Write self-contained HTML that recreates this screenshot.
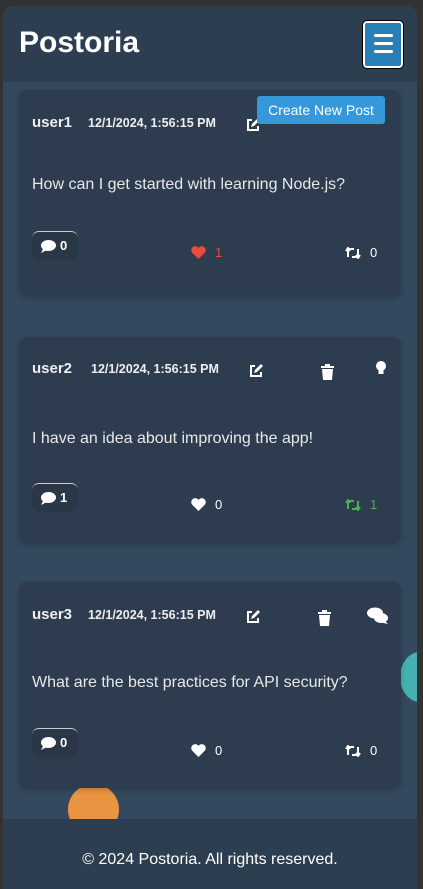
<!DOCTYPE html>
<html><head><meta charset="utf-8"><style>
*{margin:0;padding:0;box-sizing:border-box}
body{width:423px;height:889px;background:#333;font-family:"Liberation Sans",sans-serif;overflow:hidden;position:relative}
.wrap{position:absolute;left:3px;top:6px;width:414px;height:883px;background:#34495e;border-radius:10px 10px 0 0;overflow:hidden}
.hdr{position:absolute;left:0;top:0;width:414px;height:76px;background:#2c3e50}
.hdr h1{position:absolute;left:16px;top:20px;font-size:30px;color:#fff;font-weight:bold}
.menu{position:absolute;left:360px;top:15px;width:40px;height:47px;background:#2980b9;border:2px solid #fff;outline:1px solid #000;border-radius:4px}
.menu i{position:absolute;left:9px;width:19px;height:3px;background:#fff;border-radius:2px}
.card{position:absolute;left:16px;width:382px;height:206px;background:#2d3c4f;border-radius:8px;box-shadow:0 2px 6px rgba(0,0,0,.2)}
.u{position:absolute;left:13px;font-size:15px;font-weight:bold;color:#eee}
.d{position:absolute;font-size:12.5px;font-weight:bold;color:#eee}
.c{position:absolute;left:13px;font-size:16px;color:#e8e8e8}
.cb{position:absolute;left:13px;width:46px;height:29px;border-radius:7px;background:#2a3747;border-top:1px solid #ccc;color:#fff;font-size:13px;font-weight:bold;padding:6px 0 0 28px}
.cb svg{position:absolute;left:9px;top:8px}
.n{position:absolute;font-size:13px;color:#fff}
.ic{position:absolute}
.btn{position:absolute;left:254px;top:90px;width:128px;height:28px;background:#3498db;border-radius:3px;color:#fff;font-size:14px;text-align:center;line-height:28px}
.foot{position:absolute;left:0;top:813px;width:414px;height:70px;background:#2c3e50;color:#fff;font-size:16px;text-align:center;line-height:82px}
</style></head><body>
<div class="wrap">
<div class="hdr"><h1>Postoria</h1><div class="menu"><i style="top:11px"></i><i style="top:19px"></i><i style="top:27px"></i></div></div>

<div style="position:absolute;left:65px;top:778px;width:51px;height:51px;border-radius:50%;background:#e99440"></div>
<div style="position:absolute;left:397px;top:646px;width:40px;height:50px;border-radius:50%;background:#45b0b0"></div>

<!-- card1 -->
<div class="card" style="top:84px">
<div class="u" style="top:24px">user1</div><div class="d" style="left:69px;top:26px">12/1/2024, 1:56:15 PM</div>
<svg class="ic" style="left:226px;top:27px" width="16" height="16" viewBox="0 0 16 16"><path d="M7 3H3v10h10V9" fill="none" stroke="#fff" stroke-width="2"/><path d="M6 10l1-3 6-6 2 2-6 6z" fill="#fff"/></svg>
<div class="c" style="top:86px">How can I get started with learning Node.js?</div>
<div class="cb" style="top:141px"><svg width="15" height="13" viewBox="0 0 15 13"><ellipse cx="7.5" cy="5.5" rx="7.5" ry="5.5" fill="#fff"/><path d="M2 9L0 13l6-3z" fill="#fff"/></svg>0</div>
<svg class="ic" style="left:172px;top:156px" width="15" height="13" viewBox="0 0 16 14"><path d="M8 14L1 7A4 4 0 018 2a4 4 0 017 5z" fill="#e74c3c"/></svg>
<div class="n" style="left:196px;top:155px;color:#e74c3c">1</div>
<svg class="ic" style="left:326px;top:157px" width="16" height="12" viewBox="0 0 16 12"><path d="M3 10V2h6M1 4l2-3 2 3M13 2v8H7M11 8l2 3 2-3" fill="none" stroke="#fff" stroke-width="2"/></svg>
<div class="n" style="left:351px;top:155px">0</div>
</div>
<div class="btn">Create New Post</div>

<!-- card2 -->
<div class="card" style="top:331px">
<div class="u" style="top:23px">user2</div><div class="d" style="left:72px;top:25px">12/1/2024, 1:56:15 PM</div>
<svg class="ic" style="left:229px;top:26px" width="16" height="16" viewBox="0 0 16 16"><path d="M7 3H3v10h10V9" fill="none" stroke="#fff" stroke-width="2"/><path d="M6 10l1-3 6-6 2 2-6 6z" fill="#fff"/></svg>
<svg class="ic" style="left:302px;top:27px" width="13" height="16" viewBox="0 0 13 16"><path d="M0 2h13v2H0zM4 0h5v2H4zM1 5h11l-1 11H2z" fill="#fff"/></svg>
<svg class="ic" style="left:356px;top:23px" width="12" height="16" viewBox="0 0 12 16"><circle cx="6" cy="6" r="5" fill="#fff"/><rect x="3.5" y="10" width="5" height="4" fill="#fff"/></svg>
<div class="c" style="top:93px">I have an idea about improving the app!</div>
<div class="cb" style="top:146px"><svg width="15" height="13" viewBox="0 0 15 13"><ellipse cx="7.5" cy="5.5" rx="7.5" ry="5.5" fill="#fff"/><path d="M2 9L0 13l6-3z" fill="#fff"/></svg>1</div>
<svg class="ic" style="left:172px;top:161px" width="15" height="13" viewBox="0 0 16 14"><path d="M8 14L1 7A4 4 0 018 2a4 4 0 017 5z" fill="#fff"/></svg>
<div class="n" style="left:196px;top:160px">0</div>
<svg class="ic" style="left:326px;top:162px" width="16" height="12" viewBox="0 0 16 12"><path d="M3 10V2h6M1 4l2-3 2 3M13 2v8H7M11 8l2 3 2-3" fill="none" stroke="#4caf50" stroke-width="2"/></svg>
<div class="n" style="left:351px;top:160px;color:#4caf50">1</div>
</div>

<!-- card3 -->
<div class="card" style="top:576px">
<div class="u" style="top:24px">user3</div><div class="d" style="left:69px;top:26px">12/1/2024, 1:56:15 PM</div>
<svg class="ic" style="left:226px;top:27px" width="16" height="16" viewBox="0 0 16 16"><path d="M7 3H3v10h10V9" fill="none" stroke="#fff" stroke-width="2"/><path d="M6 10l1-3 6-6 2 2-6 6z" fill="#fff"/></svg>
<svg class="ic" style="left:299px;top:28px" width="13" height="16" viewBox="0 0 13 16"><path d="M0 2h13v2H0zM4 0h5v2H4zM1 5h11l-1 11H2z" fill="#fff"/></svg>
<svg class="ic" style="left:348px;top:25px" width="21" height="17" viewBox="0 0 21 17"><ellipse cx="8" cy="6" rx="8" ry="5.5" fill="#fff"/><ellipse cx="14" cy="11" rx="7" ry="5" fill="#fff"/><path d="M18 14l3 3-5-1z" fill="#fff"/></svg>
<div class="c" style="top:92px">What are the best practices for API security?</div>
<div class="cb" style="top:146px"><svg width="15" height="13" viewBox="0 0 15 13"><ellipse cx="7.5" cy="5.5" rx="7.5" ry="5.5" fill="#fff"/><path d="M2 9L0 13l6-3z" fill="#fff"/></svg>0</div>
<svg class="ic" style="left:172px;top:162px" width="15" height="13" viewBox="0 0 16 14"><path d="M8 14L1 7A4 4 0 018 2a4 4 0 017 5z" fill="#fff"/></svg>
<div class="n" style="left:196px;top:161px">0</div>
<svg class="ic" style="left:326px;top:163px" width="16" height="12" viewBox="0 0 16 12"><path d="M3 10V2h6M1 4l2-3 2 3M13 2v8H7M11 8l2 3 2-3" fill="none" stroke="#fff" stroke-width="2"/></svg>
<div class="n" style="left:351px;top:161px">0</div>
</div>

<div class="foot">© 2024 Postoria. All rights reserved.</div>
</div>
</body></html>
